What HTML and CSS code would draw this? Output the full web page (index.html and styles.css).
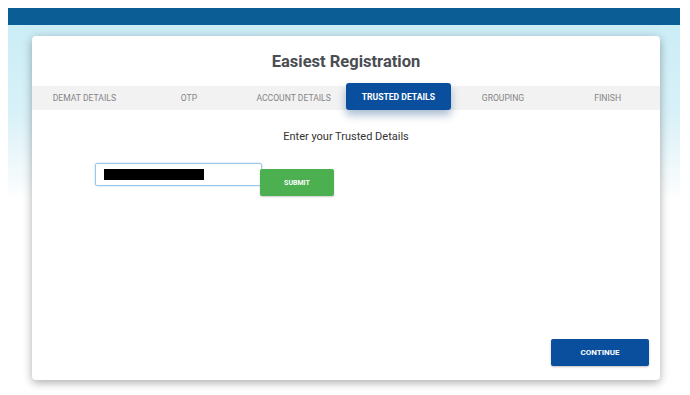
FILE: index.html
```html
<!DOCTYPE html>
<html lang="en">
<head>
  <meta charset="UTF-8" />
  <meta name="viewport" content="width=device-width, initial-scale=1.0"/>
  <title>Easiest Registration</title>
  <link rel="stylesheet" href="styles.css">
</head>
<body>
  <div class="page">
    <div class="topbar"></div>
    <div class="stage">
      <div class="card">
        <h1 class="title">Easiest Registration</h1>
        <div class="tabs">
          <div class="tab">DEMAT DETAILS</div>
          <div class="tab">OTP</div>
          <div class="tab">ACCOUNT DETAILS</div>
          <div class="tab active">TRUSTED DETAILS</div>
          <div class="tab">GROUPING</div>
          <div class="tab">FINISH</div>
        </div>
        <div class="content">
          <p class="lead">Enter your Trusted Details</p>
          <div class="row">
            <div class="field"><span class="redact"></span></div>
            <button class="btn submit">SUBMIT</button>
          </div>
        </div>
        <div class="footer">
          <button class="btn continue">CONTINUE</button>
        </div>
      </div>
    </div>
  </div>
</body>
</html>
```

FILE: styles.css
```css
body{margin:8px 10px 0 8px;background:#fff;font-family:Roboto,"Liberation Sans",Arial,sans-serif;}
.page{width:672px;}
.topbar{height:17px;background:#0b5d96;}
.stage{padding:11px 20px 15px 24px;background:linear-gradient(#cbedf6 0,#d9f1f8 90px,#f3fafc 150px,#fff 175px);}
.card{height:344px;background:#fff;border-radius:4px;box-shadow:0 3px 8px rgba(0,0,0,.28),0 0 14px rgba(0,0,0,.06);display:flex;flex-direction:column;}
.title{margin:0;height:50px;line-height:52px;text-align:center;font-size:16.5px;font-weight:bold;color:#4a4d52;}
.tabs{display:grid;grid-template-columns:repeat(6,1fr);height:24px;background:#f2f2f2;}
.tab{display:flex;align-items:center;justify-content:center;font-size:8.6px;color:#858585;}
.tab.active{margin:-3px 0 0;background:#0a4f9d;color:#fff;font-weight:bold;border-radius:3px;box-shadow:0 5px 9px rgba(10,60,120,.35);}
.content{flex:1;}
.lead{margin:20px 0 0;text-align:center;font-size:11px;color:#333;}
.row{display:flex;align-items:flex-start;margin:20px 0 0 63px;}
.field{width:157px;height:21px;border:1px solid #9ec6ea;border-radius:2px;box-shadow:0 0 2px rgba(100,160,220,.5);display:flex;align-items:center;padding-left:8px;}
.redact{width:100px;height:11px;background:#000;}
.btn{border:0;color:#fff;font-family:inherit;font-weight:bold;font-size:7px;border-radius:2px;}
.submit{margin-top:6px;margin-left:-2px;width:74px;height:27px;background:#4caf50;box-shadow:0 1px 2px rgba(0,0,0,.2);}
.footer{display:flex;justify-content:flex-end;padding:0 11px 14px 0;}
.continue{width:98px;height:27px;background:#0a4f9d;font-size:8px;box-shadow:0 1px 2px rgba(0,0,0,.25);}
```
